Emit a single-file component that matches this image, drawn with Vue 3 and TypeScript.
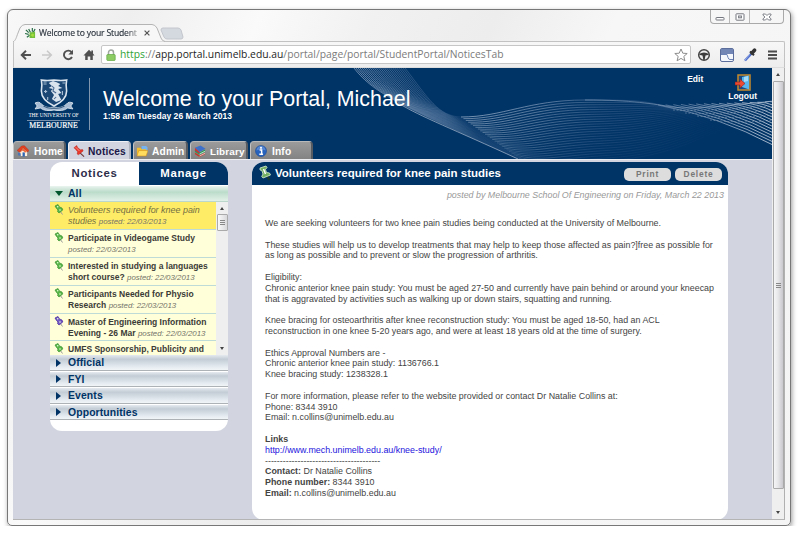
<script setup lang="ts">
interface Notice {
  title: string
  more?: string
  posted?: string
  tone: 'green' | 'purple'
  selected?: boolean
}

const notices: Notice[] = [
  { title: 'Volunteers required for knee pain', more: 'studies ', posted: '22/03/2013', tone: 'green', selected: true },
  { title: 'Participate in Videogame Study', posted: '22/03/2013', tone: 'green' },
  { title: 'Interested in studying a languages', more: 'short course? ', posted: '22/03/2013', tone: 'green' },
  { title: 'Participants Needed for Physio', more: 'Research ', posted: '22/03/2013', tone: 'green' },
  { title: 'Master of Engineering Information', more: 'Evening - 26 Mar ', posted: '22/03/2013', tone: 'purple' },
  { title: 'UMFS Sponsorship, Publicity and', tone: 'green' },
]

const categories: string[] = ['Official', 'FYI', 'Events', 'Opportunities']

const paragraphs: string[][] = [
  ['We are seeking volunteers for two knee pain studies being conducted at the University of Melbourne.'],
  [
    'These studies will help us to develop treatments that may help to keep those affected as pain?]free as possible for',
    'as long as possible and to prevent or slow the progression of arthritis.',
  ],
  [
    'Eligibility:',
    'Chronic anterior knee pain study: You must be aged 27-50 and currently have pain behind or around your kneecap',
    'that is aggravated by activities such as walking up or down stairs, squatting and running.',
  ],
  [
    'Knee bracing for osteoarthritis after knee reconstruction study: You must be aged 18-50, had an ACL',
    'reconstruction in one knee 5-20 years ago, and were at least 18 years old at the time of surgery.',
  ],
  ['Ethics Approval Numbers are -', 'Chronic anterior knee pain study: 1136766.1', 'Knee bracing study: 1238328.1'],
  [
    'For more information, please refer to the website provided or contact Dr Natalie Collins at:',
    'Phone: 8344 3910',
    'Email: n.collins@unimelb.edu.au',
  ],
]

const contacts: { label: string; value: string }[] = [
  { label: 'Contact:', value: 'Dr Natalie Collins' },
  { label: 'Phone number:', value: '8344 3910' },
  { label: 'Email:', value: 'n.collins@unimelb.edu.au' },
]

const mix = (a: number, b: number, t: number): number => Math.round((a + (b - a) * t) * 10) / 10

// The banner ribbon: each strand blends between the lower edge (t = 0) and the upper edge (t = 1).
const STRANDS = 26
const strands = Array.from({ length: STRANDS }, (_, i) => {
  const t = i / (STRANDS - 1)
  const px = mix(508, 448, t)
  const py = mix(92, 49, t)
  return {
    left: `M${mix(341, 392, t)} 0 C${mix(362, 415, t)} ${mix(27, 30, t)} ${mix(392, 425, t)} ${mix(39, 48, t)} ${px} ${py}`,
    right:
      `M${px} ${py} C${mix(535, 490, t)} ${mix(100, 49, t)} ${mix(540, 515, t)} ${mix(96, 32, t)} ${mix(600, 572, t)} ${mix(92, 32, t)}` +
      ` S${mix(690, 632, t)} ${mix(68, 33, t)} ${mix(730, 660, t)} ${mix(52, 40, t)}`,
    opacity: mix(0.3, 0.85, t),
  }
})

// Where the ribbon twists at its right end, strands fan out from the upper edge.
const FAN = 15
const fan = Array.from({ length: FAN }, (_, i) => {
  const s = i / (FAN - 1)
  const x = mix(645, 752, s)
  const y = mix(37, 34, s)
  return `M${x} ${y} Q${mix(705, 757, s)} ${mix(48, 33, s)} 760 ${mix(77, 34, s)}`
})
</script>

<template>
  <div class="window">
    <div class="titlebar">
      <div class="browser-tab">
        <svg class="tab-shape" viewBox="0 0 152 18">
          <path d="M0 18 C3 16 3 14 5 9 L7 4 Q9 .5 12 .5 H139 Q142 .5 144 4 L148 14 Q149 17 152 17.5" fill="#f7f7f7" stroke="#b4b4b4" />
        </svg>
        <svg class="favicon" viewBox="0 0 12 12">
          <path d="M1 2l3 3M4 1l2 4M8 0v4M11 1l-2 4M0 6l4 1M2 10l3-2" stroke="#276e45" stroke-width="1.3" />
          <path d="M5 5l6-1v7H5z" fill="#74bf3c" />
          <path d="M6 8l2-2 2 1-1 3z" fill="#a6dc3f" />
        </svg>
        <span class="tab-title">Welcome to your Student</span>
        <svg class="tab-close" viewBox="0 0 6 6"><path d="M.6.6l4.8 4.8M5.4.6L.6 5.4" stroke="#555" stroke-width="1.2" /></svg>
      </div>
      <svg class="new-tab" viewBox="0 0 24 13"><path d="M3 1H18q2 0 3 2l2 7q0 2-2 2H7q-2 0-3-2L1 3q0-2 2-2z" fill="#d4d8df" stroke="#c3c7cd" /></svg>
      <div class="win-controls">
        <span class="control">
          <svg viewBox="0 0 10 8"><rect x="1" y="4.5" width="8" height="2.5" rx=".5" fill="#fff" stroke="#74777f" /></svg>
        </span>
        <span class="control">
          <svg viewBox="0 0 10 8"><rect x="1" y=".8" width="8" height="6.4" rx=".5" fill="#fff" stroke="#74777f" /><rect x="3.6" y="3" width="2.8" height="1.8" fill="#fff" stroke="#74777f" /></svg>
        </span>
        <span class="control wide">
          <svg viewBox="0 0 10 8"><path d="M1 1h2.500L5 2.500 6.500 1H9v1.200L7 4l2 1.800V7H6.500L5 5.500 3.500 7H1V5.800L3 4 1 2.200z" fill="#fff" stroke="#74777f" stroke-width=".9" /></svg>
        </span>
      </div>
    </div>

    <div class="toolbar">
      <svg class="nav-back" viewBox="0 0 12 12"><path d="M11 6H2M6 1.800L1.700 6 6 10.200" fill="none" stroke="#505050" stroke-width="1.9" /></svg>
      <svg class="nav-forward" viewBox="0 0 12 12"><path d="M1 6h9M6 1.800L10.300 6 6 10.200" fill="none" stroke="#c9c9c9" stroke-width="1.6" /></svg>
      <svg class="nav-reload" viewBox="0 0 12 12"><path d="M9.600 3.200A4.300 4.300 0 1 0 10 8" fill="none" stroke="#505050" stroke-width="1.9" /><path d="M11 .8v4.700H6.300z" fill="#505050" /></svg>
      <svg class="nav-home" viewBox="0 0 12 12"><path d="M6 .8L.5 6.400h1.700V11h2.500V7.500h2.600V11h2.500V6.400h1.700L10 4.600V1.500H8.300V3z" fill="#505050" /></svg>
      <div class="omnibox">
        <svg class="lock" viewBox="0 0 10 12"><path d="M2.500 6V3.500a2.500 2.500 0 0 1 5 0V6" fill="none" stroke="#a0a6a0" stroke-width="1.5" /><rect x=".8" y="5.5" width="8.4" height="6" rx=".8" fill="#8dcb65" stroke="#62a844" stroke-width=".7" /></svg>
        <span class="url"><span class="scheme">https</span><span class="dim">://</span>app.portal.unimelb.edu.au<span class="dim">/portal/page/portal/StudentPortal/NoticesTab</span></span>
        <svg class="star" viewBox="0 0 14 14"><path d="M7 1l1.800 4.200 4.400.3-3.400 2.900 1.100 4.400L7 10.400l-3.900 2.400 1.100-4.400L.8 5.500l4.400-.3z" fill="#fff" stroke="#8c8c8c" /></svg>
      </div>
      <svg class="ext" viewBox="0 0 14 14"><circle cx="7" cy="7" r="5.300" fill="#eee" stroke="#454545" stroke-width="1.5" /><path d="M2 6q5-3 10 0l-1 1-2.500.5L7.600 12H6.400l-.9-4.500L3 7z" fill="#3c3c3c" /></svg>
      <svg class="ext panel" viewBox="0 0 14 14"><rect x=".5" y=".5" width="13" height="13" rx="1.5" fill="#f4f7fc" stroke="#5c6f9c" /><path d="M1 1h12v5H1z" fill="#7286b6" /><path d="M1 6.500h6l1 3q.5 2 2 2h3" fill="none" stroke="#6a82b5" /></svg>
      <svg class="ext dropper" viewBox="0 0 14 14"><path d="M2 12.500L8 6" stroke="#4d6fd0" stroke-width="2.4" /><path d="M1 13.300L6.500 6.500" stroke="#aebbe2" stroke-width=".8" /><path d="M7 3.500L11 7.300" stroke="#333" stroke-width="2" /><path d="M9 5l2.500-2.800" stroke="#333" stroke-width="3.6" stroke-linecap="round" /></svg>
      <svg class="menu" viewBox="0 0 10 10"><path d="M0 1.500h9M0 5h9M0 8.500h9" stroke="#4b4b4b" stroke-width="1.9" /></svg>
    </div>

    <div class="viewport">
      <div class="page">
        <header class="banner">
          <svg class="ribbon" viewBox="0 0 760 91">
            <defs>
              <linearGradient id="fadeLeft" gradientUnits="userSpaceOnUse" x1="370" y1="40" x2="425" y2="5">
                <stop offset="0" stop-color="#b9c8de" stop-opacity=".8" />
                <stop offset="1" stop-color="#7f97b9" stop-opacity=".15" />
              </linearGradient>
              <linearGradient id="fadeRight" gradientUnits="userSpaceOnUse" x1="450" y1="0" x2="700" y2="0">
                <stop offset="0" stop-color="#c0cee0" stop-opacity=".85" />
                <stop offset=".3" stop-color="#a3b7d0" stop-opacity=".8" />
                <stop offset=".6" stop-color="#7891b5" stop-opacity=".45" />
                <stop offset="1" stop-color="#7891b5" stop-opacity=".05" />
              </linearGradient>
              <linearGradient id="fadeFan" gradientUnits="userSpaceOnUse" x1="640" y1="0" x2="760" y2="0">
                <stop offset="0" stop-color="#8fa5c3" stop-opacity=".5" />
                <stop offset="1" stop-color="#dde5ef" stop-opacity=".95" />
              </linearGradient>
            </defs>
            <g fill="none">
              <path v-for="(s, i) in strands" :key="'l' + i" :d="s.left" stroke="url(#fadeLeft)" stroke-width=".7" />
              <path v-for="(s, i) in strands" :key="'r' + i" :d="s.right" stroke="url(#fadeRight)" stroke-width=".8" :stroke-opacity="s.opacity" />
              <path v-for="(d, i) in fan" :key="'f' + i" :d="d" stroke="url(#fadeFan)" stroke-width=".8" />
              <path d="M572 32C620 32 640 36 660 39S720 37 760 33" stroke="#a9bbd3" stroke-opacity=".6" stroke-width=".8" />
              <path d="M660 42C690 43 720 41 760 38M672 45C700 46 730 45 760 42M684 48C710 50 735 50 760 47M697 52C715 54 740 55 760 52" stroke="#a9bbd3" stroke-opacity=".5" stroke-width=".8" stroke-dasharray="2 1.5" />
              <path d="M385 35C408 49 440 61 505 91" stroke="#c6d1e0" stroke-opacity=".6" />
            </g>
          </svg>
          <div class="brand">
            <svg class="crest" viewBox="0 0 38 33" preserveAspectRatio="none">
              <path d="M7 2q5 1 12 0 7 1 12 0-1 5 0 11 0 9-12 15Q7 22 7 13 8 7 7 2z" fill="#1c4674" stroke="#dbe5ef" stroke-width="1.5" />
              <path d="M14 5l4-2 3 1 4 2-2 2 4 2-4 1 3 4-3 1 3 6-5 2-4-3 2-4-3-4 2-2-4-1 3-2z" fill="#d8e3ee" />
              <path d="M17 8l2 2-1 3 3 2M21 19l-2 2" stroke="#47678f" fill="none" />
              <path d="M9 6h3M9 4h3M27 5h3M11 12v3M9.500 13.500h3M13 19v3M27 13v4" stroke="#a8bdd3" stroke-width="1.1" />
              <path d="M1 25q4-2 6 1 5 5 12 3 7 2 12-3 2-3 6-1l-2 3 2 3-5-1q-5 4-13 2-8 2-13-2l-5 1 2-3z" fill="#a8bcd3" stroke="#e2eaf2" stroke-width=".8" />
              <path d="M9 28q5 3 10 2 5 1 10-2" fill="none" stroke="#34587f" />
            </svg>
            <div class="brand-top">THE UNIVERSITY OF</div>
            <div class="brand-name">MELBOURNE</div>
          </div>
          <div class="greeting">
            <h1>Welcome to your Portal, Michael</h1>
            <p>1:58 am Tuesday 26 March 2013</p>
          </div>
          <div class="session">
            <span class="edit">Edit</span>
            <div class="logout">
              <svg viewBox="0 0 16 17"><path d="M3 1h12v15H3z" fill="#1b4b83" stroke="#c68b2c" stroke-width="1.5" /><path d="M7 3l7-1.500v14L7 13z" fill="#58b6ef" /><path d="M9 3l4-1v5L9 8z" fill="#a4dcfa" /><path d="M0 8h5V5l5 4.500L5 14v-3H0z" fill="#ed4b32" stroke="#8f241c" stroke-width=".6" /></svg>
              <span>Logout</span>
            </div>
          </div>
          <nav class="tabs">
            <div class="tab home">
              <svg viewBox="0 0 13 13"><path d="M2 6h9v6H4z" fill="#fff0dd" /><path d="M6 8h2.500v4.500H6z" fill="#2f65b4" /><path d="M0 6l5-5 3-.3L13 6l-1.300 1.500L6.500 3 3.300 8z" fill="#e5401f" stroke="#982a18" stroke-width=".4" /><path d="M3.300 8L6.500 3 11 7.500 9 8 6 6z" fill="#ee6a3c" /><path d="M1 8l3 1v3l-3-1z" fill="#4f76b2" /></svg>
              Home
            </div>
            <div class="tab notices">
              <svg viewBox="0 0 13 13"><path d="M7 8l5 4.500" stroke="#6d3535" stroke-width="1.2" /><path d="M1 3l3-2.500 1 2.300 3 2.400 2.500-.2.500 1.500L6 10.500l-1.500-.7.500-2.500L3 5z" fill="#e8392c" stroke="#b12420" stroke-width=".5" /><path d="M3 2.500l4 4" stroke="#ffa79a" stroke-width=".9" /></svg>
              Notices
            </div>
            <div class="tab admin">
              <svg viewBox="0 0 13 13"><path d="M6 1h5l1.500 1.500V8H6z" fill="#75b4f0" /><path d="M1 3h4l1 1.500h5V11H1z" fill="#f4bf2d" /><path d="M3 6h10l-2 6H1z" fill="#ffdc5d" stroke="#cd8a19" stroke-width=".6" /></svg>
              Admin
            </div>
            <div class="tab library">
              <svg viewBox="0 0 13 13"><path d="M1 8l5 3 6-3v2l-6 3-5-3z" fill="#c53b2d" /><path d="M1 5l5 3 6-3v2.500l-6 3-5-3z" fill="#2c9b58" /><path d="M1 3l6-2.500L12.500 4 6 7.500z" fill="#3d70c9" /><path d="M1 3l5 4.500v2L1 6z" fill="#c73538" /><path d="M6 9.800l6-3M6 12l6-3" stroke="#fff" stroke-width=".7" /></svg>
              Library
            </div>
            <div class="tab info">
              <svg viewBox="0 0 13 13"><circle cx="6.500" cy="6.500" r="6" fill="#2863bd" stroke="#1c4b96" stroke-width=".6" /><path d="M1.500 6a5 5 0 0 1 10 0q-5-2-10 0z" fill="#739fdf" opacity=".6" /><path d="M5 5.500h2.200V10M4.700 10h4" stroke="#fff" stroke-width="1.6" fill="none" /><circle cx="6.500" cy="3.100" r="1.100" fill="#fff" /></svg>
              Info
            </div>
          </nav>
        </header>

        <div class="columns">
          <aside class="sidebar">
            <div class="side-tabs">
              <div class="side-tab current">Notices</div>
              <div class="side-tab manage">Manage</div>
            </div>
            <div class="section all"><i class="caret down"></i>All</div>
            <div class="list-wrap">
              <ul class="notice-list">
                <li v-for="(n, i) in notices" :key="i" class="notice" :class="{ selected: n.selected }">
                  <svg class="pin" :class="n.tone" viewBox="0 0 10 11">
                    <path class="needle" d="M6 7l2.500 3.500" />
                    <path class="body" d="M1 2l3-1.500L5.500 3l2.500 1 .8 2L5 9 3.500 7.500 4 6 2.500 4.500z" />
                    <circle class="shine" cx="3.700" cy="2.700" r=".8" /><circle class="shine" cx="6" cy="6" r=".8" />
                  </svg>
                  <div>
                    <div>{{ n.title }}</div>
                    <div v-if="n.posted">{{ n.more }}<em>posted: {{ n.posted }}</em></div>
                  </div>
                </li>
              </ul>
              <div class="mini-scroll">
                <i class="arrow up"></i>
                <div class="mini-thumb"><i></i><i></i><i></i></div>
                <i class="arrow down"></i>
              </div>
            </div>
            <div v-for="c in categories" :key="c" class="section"><i class="caret right"></i>{{ c }}</div>
          </aside>

          <article class="card">
            <div class="card-head">
              <svg class="head-pin" viewBox="0 0 14 17"><path d="M8 9l3.500 6" stroke="#183a31" stroke-width="2.4" /><path d="M2 3l6-2 1 1.500-1.500 2 1 3 3 .5 1 2L5 13l-1.300-1.500L5 9 3.800 5.500 2 5z" fill="#72ae62" stroke="#d9efcf" stroke-width=".8" /><path d="M5.500 4l2 5" stroke="#fff" stroke-width="1.5" /></svg>
              <h2>Volunteers required for knee pain studies</h2>
              <button type="button">Print</button>
              <button type="button">Delete</button>
            </div>
            <p class="byline">posted by Melbourne School Of Engineering on Friday, March 22 2013</p>
            <div class="content">
              <div v-for="(p, i) in paragraphs" :key="i" class="para">
                <div v-for="l in p" :key="l">{{ l }}</div>
              </div>
              <div><b>Links</b></div>
              <div><a class="link">http://www.mech.unimelb.edu.au/knee-study/</a></div>
              <div class="dashes">---------------------------------------</div>
              <div v-for="c in contacts" :key="c.label"><b>{{ c.label }}</b> {{ c.value }}</div>
            </div>
          </article>
        </div>
      </div>

      <div class="scrollbar">
        <i class="arrow up"></i>
        <div class="thumb"><i></i><i></i><i></i></div>
        <i class="arrow down"></i>
      </div>
    </div>
  </div>
</template>

<style>
body {
  background: #fff;
  overflow: hidden;
}
</style>

<style scoped>
* {
  box-sizing: border-box;
}
svg {
  display: block;
  flex: none;
}
.window {
  display: flex;
  flex-direction: column;
  width: 784px;
  height: 517px;
  margin: 9px 0 0 7px;
  padding: 0 5px 5px;
  border: 1px solid #777;
  border-radius: 6px 6px 5px 5px;
  background: linear-gradient(115deg, #f8f8f8 0, #efefef 12%, #fafafa 25%, #f1f1f1 36%, #ededed 48%, #f7f7f7 60%, #f4f4f4 100%);
  box-shadow: 1px 2px 5px rgba(0, 0, 0, 0.4);
  font-family: 'Liberation Sans', Arial, sans-serif;
}
.titlebar {
  display: flex;
  height: 31px;
  flex: none;
}
.browser-tab {
  position: relative;
  z-index: 1;
  display: flex;
  align-items: center;
  width: 152px;
  height: 18px;
  margin-top: 14px;
  padding-left: 12px;
}
.tab-shape {
  position: absolute;
  inset: 0;
  width: 152px;
  height: 18px;
}
.favicon {
  position: relative;
  width: 11px;
  height: 11px;
}
.tab-title {
  position: relative;
  width: 101px;
  margin-left: 3px;
  color: transparent;
  background: linear-gradient(90deg, #222b35 86%, #a8a8a8 97%);
  background-clip: text;
  font: 8.6px/14px 'Open Sans', sans-serif;
  letter-spacing: -0.17px;
  -webkit-text-stroke: 0.15px;
  white-space: nowrap;
}
.tab-close {
  position: relative;
  width: 6px;
  height: 6px;
  margin-left: 4px;
}
.new-tab {
  width: 24px;
  height: 13px;
  margin: 17px 0 0 -5px;
}
.win-controls {
  display: flex;
  height: 14px;
  margin: 0 1px 0 auto;
  border: 1px solid #a9a9a9;
  border-top: 0;
  border-radius: 0 0 4px 4px;
}
.control {
  display: flex;
  align-items: center;
  justify-content: center;
  width: 18px;
}
.control + .control {
  width: 20px;
  border-left: 1px solid #b9b9b9;
}
.control.control.wide {
  width: 34px;
}
.control svg {
  width: 10px;
  height: 8px;
}
.toolbar {
  display: flex;
  align-items: center;
  height: 27px;
  flex: none;
  padding: 0 6px 0 6px;
  border: 1px solid #c2c2c2;
  border-bottom-color: #ddd;
  border-radius: 2px 2px 0 0;
  background: linear-gradient(#f7f7f7, #ededed);
}
.toolbar > svg {
  width: 12px;
  height: 12px;
}
.toolbar > .nav-forward,
.toolbar > .nav-reload,
.toolbar > .nav-home {
  margin-left: 9px;
}
.omnibox {
  display: flex;
  align-items: center;
  width: 590px;
  height: 19px;
  margin-left: 6px;
  padding: 0 2px 0 4px;
  border: 1px solid #c6c6c6;
  border-radius: 2px;
  background: #fff;
}
.lock {
  width: 10px;
  height: 12px;
}
.url {
  margin-left: 4px;
  color: #1d1d1d;
  font: 10.33px/17px 'Open Sans', sans-serif;
  white-space: nowrap;
}
.scheme {
  color: #2fa336;
}
.dim {
  color: #7b7b7b;
}
.star {
  width: 14px;
  height: 14px;
  margin-left: auto;
}
.toolbar > .ext {
  width: 14px;
  height: 14px;
  margin-left: 6px;
}
.toolbar > .ext.panel {
  margin-left: 9px;
}
.toolbar > .ext.dropper {
  margin-left: 9px;
}
.toolbar > .menu {
  width: 10px;
  height: 10px;
  margin-left: auto;
}
.viewport {
  display: flex;
  flex: 1;
  min-height: 0;
  border-right: 1px solid #b0b0b0;
  border-bottom: 1px solid #b4b4b4;
}
.page {
  display: flex;
  flex-direction: column;
  width: 760px;
  overflow: hidden;
  background: #d2d5df;
}
.banner {
  position: relative;
  display: grid;
  grid-template-columns: 90px 1fr auto;
  grid-template-rows: 73px 18px;
  height: 91px;
  flex: none;
  background: #003366;
  color: #fff;
}
.ribbon {
  position: absolute;
  inset: 0;
  width: 760px;
  height: 91px;
}
.brand {
  position: relative;
  width: 77px;
  height: 52px;
  margin-top: 10px;
  padding: 0 10px 0 15px;
  border-right: 1px solid #8095ae;
  text-align: center;
}
.crest {
  width: 40px;
  height: 33px;
  margin: 0 auto;
}
.brand-top {
  margin: 0 -3px;
  padding-bottom: 1px;
  font: 5.2px/8px 'Liberation Serif', serif;
  white-space: nowrap;
}
.brand-name {
  margin: 0 -1px;
  border-top: 1px solid #7890ab;
  font: 7.8px/10px 'Liberation Serif', serif;
  -webkit-text-stroke: 0.2px #fff;
}
.greeting {
  position: relative;
  white-space: nowrap;
}
.greeting h1 {
  margin: 19px 0 0;
  font-size: 21.4px;
  font-weight: 400;
  line-height: 24px;
}
.greeting p {
  margin: 0;
  font-size: 8.56px;
  font-weight: 700;
  line-height: 11px;
}
.session {
  position: relative;
  display: flex;
  padding: 6px 15px 0 0;
  font-size: 8.5px;
  font-weight: 700;
  line-height: 10px;
}
.logout {
  margin-left: 25px;
}
.logout svg {
  width: 16px;
  height: 17px;
  margin: 0 auto;
}
.logout span {
  display: block;
}
.tabs {
  position: relative;
  grid-column: 1 / -1;
  display: flex;
  gap: 2px;
}
.tab {
  display: flex;
  align-items: center;
  gap: 5px;
  padding: 1px 0 0 4px;
  border: 1px solid #5f6062;
  border-top-color: #b9b9b9;
  border-left-color: #c4c4c4;
  border-bottom: 0;
  border-right: 2px solid #565b62;
  border-radius: 4px 4px 0 0;
  background: linear-gradient(#9b9b9b, #838383);
  color: #fff;
  font-size: 10.2px;
  font-weight: 700;
  letter-spacing: 0.15px;
}
.tab svg {
  width: 12px;
  height: 12px;
}
.tab.home {
  width: 53px;
  padding-left: 3px;
}
.tab.notices {
  width: 63px;
  gap: 3px;
  border-color: #eef0f5;
  border-right-color: #aeb3bf;
  background: #d2d5df;
  color: #1b1748;
}
.tab.admin {
  width: 55px;
  gap: 4px;
  padding-left: 2px;
}
.tab.library {
  width: 58px;
  gap: 4px;
  padding-left: 3px;
  font-size: 9.9px;
}
.tab.info {
  width: 63px;
}
.columns {
  display: flex;
  flex: 1;
  align-items: flex-start;
  padding: 3px 0 0 37px;
  border-top: 1px solid #eceef2;
}
.sidebar {
  width: 178px;
  height: 269px;
  margin-top: -1px;
  overflow: hidden;
  border-radius: 12px;
  background: #fff;
}
.side-tabs {
  display: grid;
  grid-template-columns: 1fr 1fr;
  height: 24px;
  border-bottom: 1px solid #fff;
}
.side-tab {
  color: #2d2d4a;
  font-size: 11.4px;
  font-weight: 700;
  letter-spacing: 0.7px;
  line-height: 23px;
  text-align: center;
}
.side-tab.manage {
  background: #003366;
  color: #fff;
}
.section {
  display: flex;
  align-items: center;
  height: 15.5px;
  margin-bottom: 1px;
  padding-top: 1px;
  border-bottom: 1px solid #acb2b5;
  background: linear-gradient(#e5eaef 0, #c3ccd5 28%, #e2e9ef 75%, #f1f5f7);
  color: #003366;
  font-size: 10.4px;
  font-weight: 700;
  letter-spacing: 0.12px;
}
.section.all {
  height: 16px;
  margin: 0;
  padding: 0;
  border-bottom-color: #bbd6ca;
  background: linear-gradient(#eaf4ef, #bbdcca 40%, #e3f1e8);
}
.caret {
  border: solid transparent;
}
.caret.down {
  margin: 0 5px;
  border-width: 5px 4px 0;
  border-top-color: #00572e;
}
.caret.right {
  margin: 0 7px 0 6px;
  border-width: 4px 0 4px 5px;
  border-left-color: #003366;
}
.list-wrap {
  display: flex;
  height: 153px;
}
.notice-list {
  width: 166px;
  margin: 0;
  padding: 0;
  overflow: hidden;
  list-style: none;
}
.notice {
  display: flex;
  height: 27.9px;
  padding: 3px 0 0 4px;
  border-bottom: 1px solid #bfdbd7;
  background: #ffffd9;
  color: #3b3b37;
  font-size: 8.5px;
  font-weight: 700;
  line-height: 11px;
  white-space: pre;
}
.notice:last-child {
  height: 14px;
  border-bottom: 0;
}
.notice.selected {
  background: #ffec66;
  color: #737044;
  font-size: 8.95px;
  font-style: italic;
  font-weight: 400;
}
.notice em {
  color: #73736a;
  font-size: 7.9px;
  font-weight: 400;
}
.pin {
  width: 10px;
  height: 11px;
  margin: -1px 4px 0 0;
}
.needle {
  fill: none;
  stroke: #999;
}
.pin .body {
  fill: #57b647;
  stroke: #3c9434;
  stroke-width: 0.7;
}
.pin .shine {
  fill: #e4ffd8;
}
.pin.purple .body {
  fill: #7358c8;
  stroke: #43269a;
}
.mini-scroll,
.scrollbar {
  display: flex;
  flex-direction: column;
  align-items: center;
  width: 12px;
  background: #efefef;
}
.arrow {
  border: solid transparent;
}
.arrow.up {
  margin: 5px 0 4px;
  border-width: 0 2.5px 3px;
  border-bottom-color: #444;
}
.arrow.down {
  margin: auto 0 5px;
  border-width: 3px 2.5px 0;
  border-top-color: #444;
}
.mini-thumb,
.thumb {
  display: flex;
  flex-direction: column;
  align-items: center;
  justify-content: center;
  gap: 1px;
  width: 11px;
  height: 17px;
  border: 1px solid #aaa;
  border-radius: 1px;
  background: linear-gradient(90deg, #fafafa, #d9d9dc);
}
.mini-thumb i,
.thumb i {
  width: 5px;
  height: 1px;
  background: #888;
}
.scrollbar .thumb {
  height: 408px;
  margin-top: 1px;
  background: linear-gradient(90deg, #f5f5f6, #e7e7ea 45%, #c8c8cd);
}
.card {
  width: 476px;
  height: 358px;
  margin: -1px 0 0 24px;
  overflow: hidden;
  border-radius: 12px;
  background: #fff;
}
.card-head {
  display: flex;
  align-items: center;
  height: 23px;
  padding: 0 6px;
  background: #003366;
}
.head-pin {
  width: 14px;
  height: 17px;
}
h2 {
  margin: 0 auto 1px 3px;
  color: #fff;
  font-size: 11.5px;
  line-height: 21px;
  white-space: nowrap;
}
button {
  width: 47px;
  height: 13px;
  margin: 1px 0 0 4px;
  padding: 0;
  border: 0;
  border-radius: 5px;
  background: #ddd;
  color: #777;
  font: 700 8.4px/13px 'Liberation Sans', sans-serif;
  letter-spacing: 0.8px;
}
.byline {
  margin: 4px 4px 0 0;
  color: #999;
  font-size: 8.88px;
  font-style: italic;
  line-height: 12px;
  text-align: right;
}
.content {
  padding: 17px 0 0 13px;
  color: #444;
  font-size: 8.88px;
  line-height: 10.8px;
  white-space: nowrap;
}
.para {
  margin-bottom: 10.8px;
}
.link {
  color: #2414dd;
}
</style>
